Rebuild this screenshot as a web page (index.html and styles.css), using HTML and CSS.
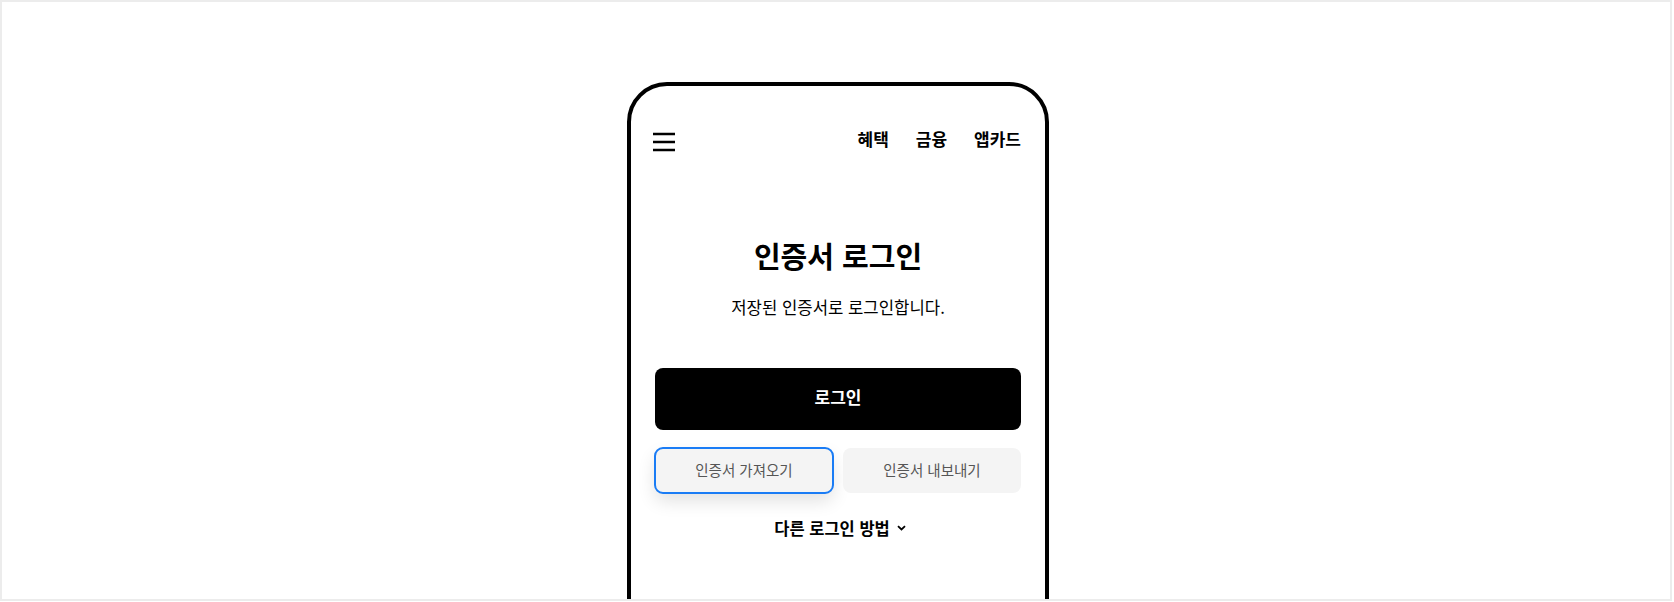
FILE: index.html
```html
<!DOCTYPE html>
<html lang="ko">
	<head>
		<meta charset="UTF-8">
		<meta name="viewport" content="width=device-width,user-scalable=no" />
		<title>인증서 로그인</title>
		<link rel="stylesheet" href="styles.css">
	</head>
	<body>
		<section class="stage">
			<div class="phone">
				<header class="top">
					<a href="javascript:;" class="menu">
						<svg width="24" height="24" viewBox="0 0 24 24">
							<path d="M1 5h22M1 13h22M1 21h22" stroke="#000" stroke-width="2.7" fill="none"/>
						</svg>
					</a>
					<nav class="gnb">
						<a href="javascript:;">혜택</a>
						<a href="javascript:;">금융</a>
						<a href="javascript:;">앱카드</a>
					</nav>
				</header>
				<div class="cont">
					<h1 class="tit">인증서 로그인</h1>
					<p class="desc">저장된 인증서로 로그인합니다.</p>
					<a href="javascript:;" class="btn-login">로그인</a>
					<div class="btn-row">
						<a href="javascript:;" class="btn-sub focus">인증서 가져오기</a>
						<a href="javascript:;" class="btn-sub">인증서 내보내기</a>
					</div>
					<a href="javascript:;" class="more">다른 로그인 방법
						<svg width="9" height="6" viewBox="0 0 9 6">
							<path d="M1 1.2l3.5 3.3 3.5-3.3" stroke="#000" stroke-width="1.8" fill="none"/>
						</svg>
					</a>
				</div>
			</div>
		</section>
	</body>
</html>
```

FILE: styles.css
```css
body{
	margin: 0;
	font-family: "Noto Sans CJK KR", "Noto Sans", sans-serif;
	color: #000;
}
a{
	color: inherit;
	text-decoration: none;
}
.stage{
	box-sizing: border-box;
	width: 1672px;
	height: 601px;
	border: 2px solid #ececec;
	padding-left: 4px;
	overflow: hidden;
	background: #fff;
}
.phone{
	width: 414px;
	height: 600px;
	margin: 80px auto 0;
	border: 4px solid #000;
	border-radius: 40px 40px 0 0;
}
.top{
	display: flex;
	justify-content: space-between;
	align-items: center;
	height: 28px;
	padding: 41px 24px 0 21px;
}
.menu{
	display: block;
	height: 24px;
}
.gnb{
	display: flex;
	gap: 27px;
	margin-bottom: 4px;
}
.gnb a{
	font-size: 17px;
	font-weight: 700;
	line-height: 28px;
}
.cont{
	padding: 0 24px;
	text-align: center;
}
.tit{
	margin: 81px 0 0;
	font-size: 29px;
	font-weight: 700;
	line-height: 38px;
}
.desc{
	margin: 20px 0 0;
	font-size: 16.7px;
	line-height: 26px;
}
.btn-login{
	display: flex;
	justify-content: center;
	align-items: center;
	box-sizing: border-box;
	height: 62px;
	padding-bottom: 5px;
	margin-top: 48px;
	border-radius: 8px;
	background: #000;
	color: #fff;
	font-size: 17px;
	font-weight: 700;
}
.btn-row{
	display: flex;
	gap: 10px;
	margin-top: 18px;
}
.btn-sub{
	flex: 1;
	display: flex;
	justify-content: center;
	align-items: center;
	box-sizing: border-box;
	height: 45px;
	padding-bottom: 2px;
	border-radius: 8px;
	background: #f4f4f4;
	color: #555;
	font-size: 14.5px;
}
.focus{
	outline: 2px solid #1a7cf5;
	outline-offset: -1px;
	box-shadow: 0 8px 18px rgba(0,0,0,.12);
}
.more{
	display: inline-flex;
	align-items: center;
	gap: 7px;
	margin-top: 23px;
	margin-left: 4px;
	font-size: 16.5px;
	font-weight: 700;
	line-height: 24px;
}
```
